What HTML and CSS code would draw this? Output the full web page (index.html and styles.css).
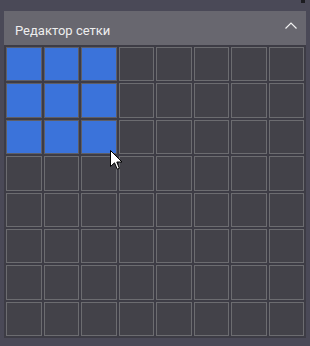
FILE: index.html
```html
<!DOCTYPE html>
<html lang="ru">
<head>
<meta charset="utf-8">
<title>Редактор сетки</title>
<link rel="stylesheet" href="styles.css">
</head>
<body>
<div class="corner-mark"></div>
<section class="panel">
  <header class="panel-header">
    <span class="panel-title">Редактор сетки</span>
    <svg class="chevron" width="12" height="7" viewBox="0 0 12 7"><path d="M0.5 6.5 L6 1 L11.5 6.5" fill="none" stroke="#f2f2f2" stroke-width="1.2"/></svg>
  </header>
  <div class="grid">
    <div class="cell on"></div><div class="cell on"></div><div class="cell on"></div><div class="cell"></div><div class="cell"></div><div class="cell"></div><div class="cell"></div><div class="cell"></div>
    <div class="cell on"></div><div class="cell on"></div><div class="cell on"></div><div class="cell"></div><div class="cell"></div><div class="cell"></div><div class="cell"></div><div class="cell"></div>
    <div class="cell on"></div><div class="cell on"></div><div class="cell on"></div><div class="cell"></div><div class="cell"></div><div class="cell"></div><div class="cell"></div><div class="cell"></div>
    <div class="cell"></div><div class="cell"></div><div class="cell"></div><div class="cell"></div><div class="cell"></div><div class="cell"></div><div class="cell"></div><div class="cell"></div>
    <div class="cell"></div><div class="cell"></div><div class="cell"></div><div class="cell"></div><div class="cell"></div><div class="cell"></div><div class="cell"></div><div class="cell"></div>
    <div class="cell"></div><div class="cell"></div><div class="cell"></div><div class="cell"></div><div class="cell"></div><div class="cell"></div><div class="cell"></div><div class="cell"></div>
    <div class="cell"></div><div class="cell"></div><div class="cell"></div><div class="cell"></div><div class="cell"></div><div class="cell"></div><div class="cell"></div><div class="cell"></div>
    <div class="cell"></div><div class="cell"></div><div class="cell"></div><div class="cell"></div><div class="cell"></div><div class="cell"></div><div class="cell"></div><div class="cell"></div>
  </div>
</section>
<svg class="cursor" width="13" height="21" viewBox="0 0 13 21"><path d="M0.5 0.5 L0.5 16.5 L4.5 12.8 L7.2 19.2 L9.4 18.3 L6.8 12 L12 12 Z" fill="#ffffff" stroke="#000000" stroke-width="1" stroke-linejoin="round"/></svg>
</body>
</html>
```

FILE: styles.css
```css
html, body {
  margin: 0;
  padding: 0;
}
body {
  width: 310px;
  height: 346px;
  background: #4a4957;
  position: relative;
  overflow: hidden;
  font-family: Roboto, "Noto Sans", sans-serif;
}
.corner-mark {
  position: absolute;
  left: 301px;
  top: 0;
  width: 4px;
  height: 3px;
  background: #1c1c20;
}
.panel {
  margin: 11px 0 0 4px;
  width: 302px;
}
.panel-header {
  height: 34px;
  background: #68676f;
  display: flex;
  align-items: center;
  justify-content: space-between;
  padding: 0 10px 0 11px;
  box-sizing: border-box;
}
.panel-title {
  color: #eeeeee;
  font-size: 13px;
  padding-top: 4px;
}
.chevron {
  margin-top: -5px;
  margin-right: -1px;
}
.grid {
  background: #3d3c45;
  padding: 1px;
  height: 293px;
  box-sizing: border-box;
  display: grid;
  grid-template-columns: repeat(8, 1fr);
  grid-template-rows: repeat(8, 1fr);
}
.cell {
  margin: 1px;
  border: 1px solid #6c6c70;
  background: #434249;
}
.cell.on {
  background: #3b73da;
  border-color: #5e5e66;
}
.cursor {
  position: absolute;
  left: 110px;
  top: 150px;
}
```
